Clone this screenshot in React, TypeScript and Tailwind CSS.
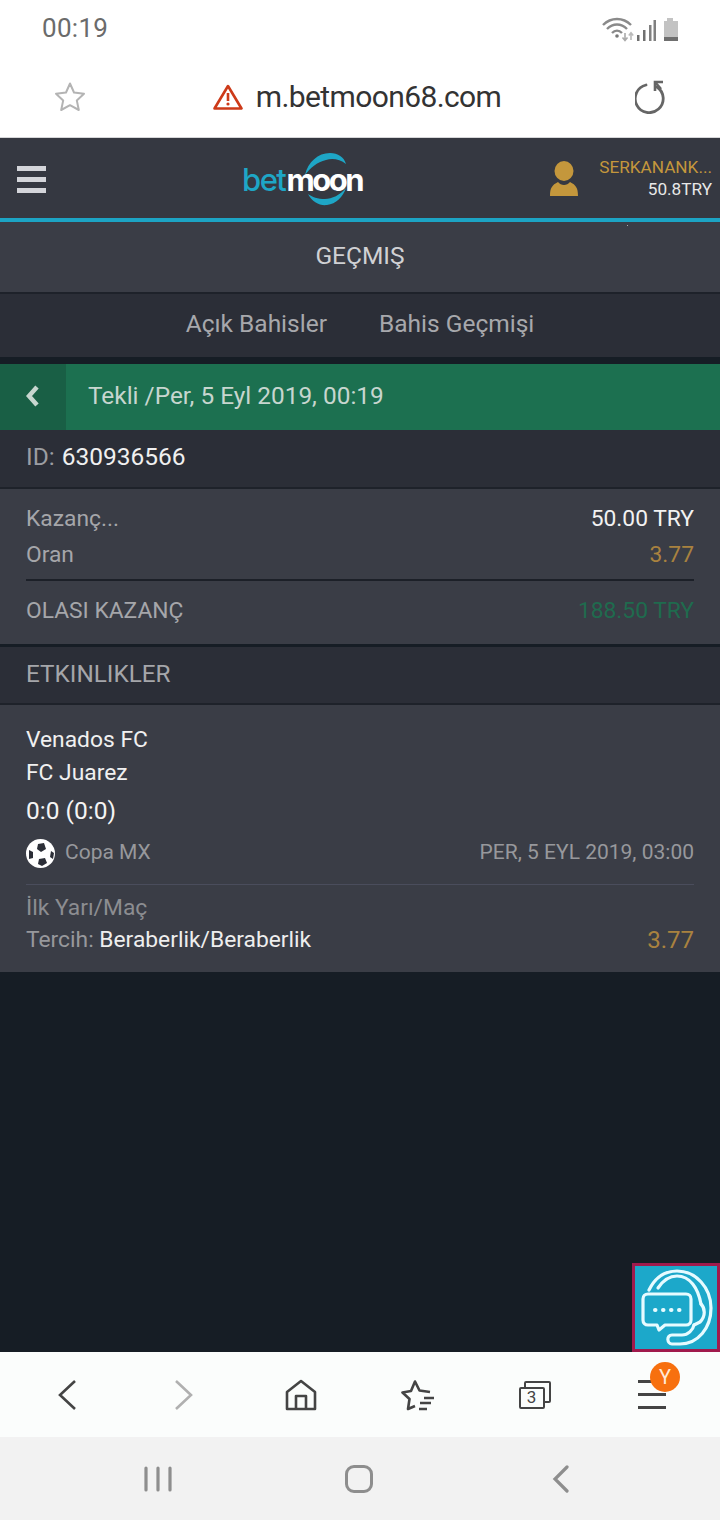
import React from 'react';

const Row: React.FC<{ left: React.ReactNode; right: React.ReactNode; className?: string }> = ({ left, right, className }) => (
  <div className={`flex items-center justify-between ${className ?? ''}`}>
    {left}
    {right}
  </div>
);

const Logo = () => (
  <div className="relative w-[122px] h-[54px] flex items-center">
    <svg className="absolute left-0 top-[1px]" width="122" height="54" viewBox="0 0 122 54" fill="#1ea6c6">
      <path d="M63 23 C66 10 76 1 88 1 C96 1 102 5 104 12 C98 7 90 6 84 8 C75 10 68 16 63 23 Z" />
      <path d="M66 42 C70 50 78 54 85 53 C94 52 101 45 104 36 C98 43 90 47 83 47 C76 47 70 45 66 42 Z" />
    </svg>
    <span className="relative mt-[3px] font-['Inter',sans-serif] text-[31px] leading-none font-medium tracking-[-1.5px] text-[#1ea6c6]">
      bet<span className="text-white font-bold tracking-[-2.5px] pl-[1px]">moon</span>
    </span>
  </div>
);

const App = () => {
  return (
    <div className="w-[720px] h-[1520px] flex flex-col bg-[#161d25] font-['Roboto',sans-serif] relative overflow-hidden">
      {/* status bar */}
      <div className="h-[57px] bg-white flex items-center justify-between pl-[42px] pr-[40px] shrink-0">
        <span className="text-[26px] text-[#6b6b6b] tracking-[0.3px]">00:19</span>
        <svg width="78" height="26" viewBox="0 0 78 26" fill="none">
          <path d="M1 9 C9 1 21 1 29 9" stroke="#8a8a8a" strokeWidth="2.4" />
          <path d="M5 13 C11 7 19 7 25 13" stroke="#8a8a8a" strokeWidth="2.4" />
          <path d="M10 17 C13 14 17 14 20 17" stroke="#8a8a8a" strokeWidth="2.4" />
          <circle cx="15" cy="20" r="1.8" fill="#777" />
          <path d="M23 17 V24 M20.5 21.5 L23 24.5 L25.5 21.5" stroke="#aaa" strokeWidth="1.6" />
          <path d="M29 24 V17 M26.8 19.5 L29 16.8 L31.2 19.5" stroke="#bbb" strokeWidth="1.6" />
          <rect x="35" y="19" width="2.5" height="6" fill="#707070" />
          <rect x="41" y="14" width="2.5" height="11" fill="#707070" />
          <rect x="47" y="9" width="2.5" height="16" fill="#808080" />
          <rect x="51.5" y="4" width="2.5" height="21" fill="#808080" />
          <path d="M62 25 V5 H65 V2 H71 V5 H76 V25 Z" fill="#c3c3c3" />
          <rect x="62" y="21" width="14" height="4" fill="#6f6f6f" />
        </svg>
      </div>

      {/* url bar */}
      <div className="h-[81px] bg-white border-b border-[#d6d6d8] flex items-center shrink-0 relative">
        <div className="w-[140px] pl-[54px]">
          <svg width="32" height="32" viewBox="0 0 32 32" fill="none">
            <path d="M16 2.5 L20 11.5 L30 12.8 L22.8 19.4 L24.8 29 L16 24.2 L7.2 29 L9.2 19.4 L2 12.8 L12 11.5 Z" stroke="#b4b4b4" strokeWidth="2" strokeLinejoin="round" />
          </svg>
        </div>
        <div className="flex-1 flex items-center justify-center gap-[13px] pr-[6px]">
          <svg width="30" height="26" viewBox="0 0 30 26" fill="none">
            <path d="M15 2 L28.5 24.5 H1.5 Z" stroke="#cd3a19" strokeWidth="2.6" strokeLinejoin="round" />
            <path d="M15 9 V17" stroke="#cd3a19" strokeWidth="2.6" />
            <circle cx="15" cy="20" r="1.6" fill="#cd3a19" />
          </svg>
          <span className="text-[30px] text-[#333] leading-none tracking-[-0.6px]">m.betmoon68.com</span>
        </div>
        <div className="w-[140px] pl-[55px]">
          <svg width="32" height="34" viewBox="0 0 32 34" fill="none" stroke="#666">
            <path d="M11 5 A14 14 0 1 0 22 7" strokeWidth="2.8" strokeLinecap="round" />
            <path d="M28 2 H20 V11" strokeWidth="2.6" />
            <path d="M20 2 L26 9" strokeWidth="2.6" />
          </svg>
        </div>
      </div>

      {/* site header */}
      <div className="h-[80px] bg-[#353841] flex items-center shrink-0 relative">
        <div className="w-[178px] pl-[17px] flex flex-col gap-[6px] pt-[3px]">
          <div className="w-[29px] h-[5px] bg-[#d4d5da]" />
          <div className="w-[29px] h-[5px] bg-[#d4d5da]" />
          <div className="w-[29px] h-[5px] bg-[#d4d5da]" />
        </div>
        <div className="w-[64px]" />
        <Logo />
        <div className="flex-1" />
        <svg className="mr-[21px]" width="28" height="35" viewBox="0 0 28 35" fill="#c4973c">
          <ellipse cx="14" cy="10" rx="9.5" ry="10" />
          <path d="M0 35 C0 27 2 24 8 21 C11 25 17 25 20 21 C26 24 28 27 28 35 Z" />
        </svg>
        <div className="flex flex-col items-end pr-[8px] text-[17.2px] leading-[22px]">
          <span className="text-[#c4973c]">SERKANANK...</span>
          <span className="text-[#e8e8e8]">50.8TRY</span>
        </div>
      </div>
      <div className="h-[4px] bg-[#1ca4c4] shrink-0" />

      {/* title */}
      <div className="h-[72px] bg-[#3a3d46] flex items-center justify-center pb-[2px] text-[24.5px] text-[#d0d1d4] shrink-0 border-b-2 border-[#1e222a] relative">
        GEÇMIŞ
        <div className="absolute left-[627px] top-[3px] w-[1px] h-[1px] bg-[#aaaaaa]" />
      </div>

      {/* tabs */}
      <div className="h-[63px] bg-[#2b2e37] flex items-center justify-center gap-[52px] pb-[3px] text-[24.5px] text-[#a7a8ac] shrink-0">
        <span>Açık Bahisler</span>
        <span>Bahis Geçmişi</span>
      </div>
      <div className="h-[7px] bg-[#161d25] shrink-0" />

      {/* bet header */}
      <div className="h-[66px] bg-[#1c7050] flex items-center text-[24.4px] text-[#c7d6cf] shrink-0">
        <div className="w-[66px] h-full bg-[#195f45] flex items-center justify-center pb-[2px]">
          <svg width="16" height="24" viewBox="0 0 16 24" fill="none">
            <path d="M12 3 L4 12 L12 21" stroke="#c7d6cf" strokeWidth="4.5" />
          </svg>
        </div>
        <span className="pl-[22px] pb-[2px]">Tekli /Per, 5 Eyl 2019, 00:19</span>
      </div>

      {/* id */}
      <div className="h-[59px] bg-[#2b2e37] flex items-center pl-[26px] pb-[3px] text-[24.5px] border-b-2 border-[#1e222a] shrink-0">
        <span className="text-[#9b9da2]">ID:</span>
        <span className="text-[#f0f0f0] pl-[7px]">630936566</span>
      </div>

      {/* summary */}
      <div className="h-[155px] bg-[#3a3d46] px-[26px] text-[22.8px] shrink-0 flex flex-col">
        <Row
          className="pt-[14px] h-[47px]"
          left={<span className="text-[#a5a6aa]">Kazanç...</span>}
          right={<span className="text-[#f2f2f2]">50.00 TRY</span>}
        />
        <Row
          className="h-[38px] box-content pb-[5px] border-b-2 border-[#1c2028]"
          left={<span className="text-[#a5a6aa]">Oran</span>}
          right={<span className="text-[#a9823f]">3.77</span>}
        />
        <Row
          className="h-[60px]"
          left={<span className="text-[#a5a6aa]">OLASI KAZANÇ</span>}
          right={<span className="text-[#1f6b4e]">188.50 TRY</span>}
        />
      </div>
      <div className="h-[3px] bg-[#161d25] shrink-0" />

      {/* events */}
      <div className="h-[58px] bg-[#2b2e37] flex items-center px-[26px] pb-[2px] text-[24.3px] text-[#a5a6aa] border-b-2 border-[#1e222a] shrink-0">
        ETKINLIKLER
      </div>

      <div className="h-[267px] bg-[#3a3d46] px-[26px] pt-[18px] shrink-0 flex flex-col">
        <div className="text-[22.8px] leading-[33px] text-[#f0f0f0]">Venados FC</div>
        <div className="text-[22.8px] leading-[33px] text-[#f0f0f0]">FC Juarez</div>
        <div className="text-[24.5px] leading-[38px] mt-[3px] text-[#f4f4f4]">0:0 (0:0)</div>
        <Row
          className="mt-[3px] h-[40px] text-[21px] text-[#97989c]"
          left={
            <div className="flex items-center gap-[10px]">
              <svg width="29" height="29" viewBox="0 0 29 29">
                <circle cx="14.5" cy="14.5" r="14.5" fill="#fff" />
                <path d="M12 5 L18 4 L20 10 L15 13 L11 10 Z" fill="#2b2e37" />
                <path d="M3 11 L7 13 L7 19 L3 20 Z" fill="#2b2e37" />
                <path d="M13 20 L19 19 L21 24 L16 27 L12 25 Z" fill="#2b2e37" />
                <path d="M25 12 L28 14 L27 20 L24 18 Z" fill="#2b2e37" />
              </svg>
              <span>Copa MX</span>
            </div>
          }
          right={<span>PER, 5 EYL 2019, 03:00</span>}
        />
        <div className="mt-[11px] h-[1px] bg-[#4a4d5c]" />
        <div className="mt-[6px] text-[22.8px] leading-[33px] text-[#8c8d91]">İlk Yarı/Maç</div>
        <Row
          className="text-[22.8px] leading-[32px]"
          left={
            <span className="text-[#97989c]">
              Tercih: <span className="text-[#eeeeee]">Beraberlik/Beraberlik</span>
            </span>
          }
          right={<span className="text-[24px] text-[#a9823f]">3.77</span>}
        />
      </div>

      <div className="flex-1 bg-[#161d25]" />

      {/* chat widget */}
      <div className="absolute left-[632px] top-[1263px] w-[88px] h-[89px] bg-[#1ca8ca] border-[3px] border-[#a01a4c] flex items-center justify-center">
        <svg width="80" height="80" viewBox="0 0 80 80" fill="none" stroke="#e6fbff" strokeWidth="3.2" strokeLinecap="round" strokeLinejoin="round">
          <path d="M13 22 C20 8 30 3 41 3 C60 3 75 20 75 40 C75 60 62 76 44 76 H36 C31 76 30 67 36 67 H46 C52 67 57 62 58 57" />
          <path d="M22 20 C28 11 34 8 41 8 C54 8 62 20 65 36" />
          <path d="M65 36 C69 40 70 48 64 54 L58 57" />
          <path d="M12 26 H50 C53 26 55 28 55 31 V52 C55 55 53 57 50 57 H29 L23 62 L21 57 H12 C9 57 7 55 7 52 V31 C7 28 9 26 12 26 Z" />
          <path d="M19 42 H19.5 M27 42 H27.5 M35 42 H35.5 M43 42 H43.5" strokeWidth="4" />
        </svg>
      </div>

      {/* browser toolbar */}
      <div className="h-[85px] bg-[#fbfdfc] flex items-center shrink-0 relative pl-[8px]">
        <div className="w-[117px] flex justify-center">
          <svg width="20" height="32" viewBox="0 0 20 32" fill="none"><path d="M18 2 L3 16 L18 30" stroke="#444" strokeWidth="2.6" /></svg>
        </div>
        <div className="w-[117px] flex justify-center">
          <svg width="20" height="32" viewBox="0 0 20 32" fill="none"><path d="M2 2 L17 16 L2 30" stroke="#b0b0b0" strokeWidth="2.6" /></svg>
        </div>
        <div className="w-[117px] flex justify-center">
          <svg width="32" height="32" viewBox="0 0 32 32" fill="none" stroke="#444" strokeWidth="2.6" strokeLinejoin="round">
            <path d="M2 13 L16 2 L30 13 V30 H2 Z" />
            <path d="M11 30 V17 H21 V30" />
          </svg>
        </div>
        <div className="w-[117px] flex justify-center">
          <svg width="34" height="32" viewBox="0 0 34 32" fill="none" stroke="#444" strokeWidth="2.6" strokeLinejoin="round">
            <path d="M14 27 L7 30 L8.5 20 L1.5 13.5 L10 12 L14 2.5 L18.5 11.5 L29 13" />
            <path d="M23 19 H33 M19 24 H30 M18 30 H26" />
          </svg>
        </div>
        <div className="w-[117px] flex justify-center">
          <div className="relative w-[32px] h-[28px]">
            <div className="absolute left-[5px] top-0 w-[27px] h-[22px] border-[2.5px] border-[#444] rounded-[2px]" />
            <div className="absolute left-0 top-[6px] w-[26px] h-[22px] border-[2.5px] border-[#444] rounded-[2px] bg-[#fbfdfc] flex items-center justify-center text-[17px] leading-none text-[#444]">3</div>
          </div>
        </div>
        <div className="flex-1 flex flex-col items-center gap-[10px] pr-[10px]">
          <div className="w-[28px] h-[3px] bg-[#444]" />
          <div className="w-[28px] h-[3px] bg-[#444]" />
          <div className="w-[28px] h-[3px] bg-[#444]" />
        </div>
        <div className="absolute left-[650px] top-[10px] w-[30px] h-[30px] rounded-full bg-[#f7700f] text-[#ffe9d8] text-[20px] flex items-center justify-center">Y</div>
      </div>

      {/* system nav */}
      <div className="h-[83px] bg-[#f2f2f2] flex items-center shrink-0">
        <div className="w-[316px] flex justify-center">
          <svg width="28" height="26" viewBox="0 0 28 26" fill="none" stroke="#8e8e8e" strokeWidth="3.2" strokeLinecap="round"><path d="M2 2 V24 M14 2 V24 M26 2 V24" /></svg>
        </div>
        <div className="w-[86px] flex justify-center">
          <div className="w-[28px] h-[28px] border-[3px] border-[#8e8e8e] rounded-[9px]" />
        </div>
        <div className="flex-1 flex justify-center">
          <svg width="18" height="28" viewBox="0 0 18 28" fill="none" stroke="#8e8e8e" strokeWidth="3.2" strokeLinecap="round"><path d="M15 2 L3 14 L15 26" /></svg>
        </div>
      </div>
    </div>
  );
};

export default App;
